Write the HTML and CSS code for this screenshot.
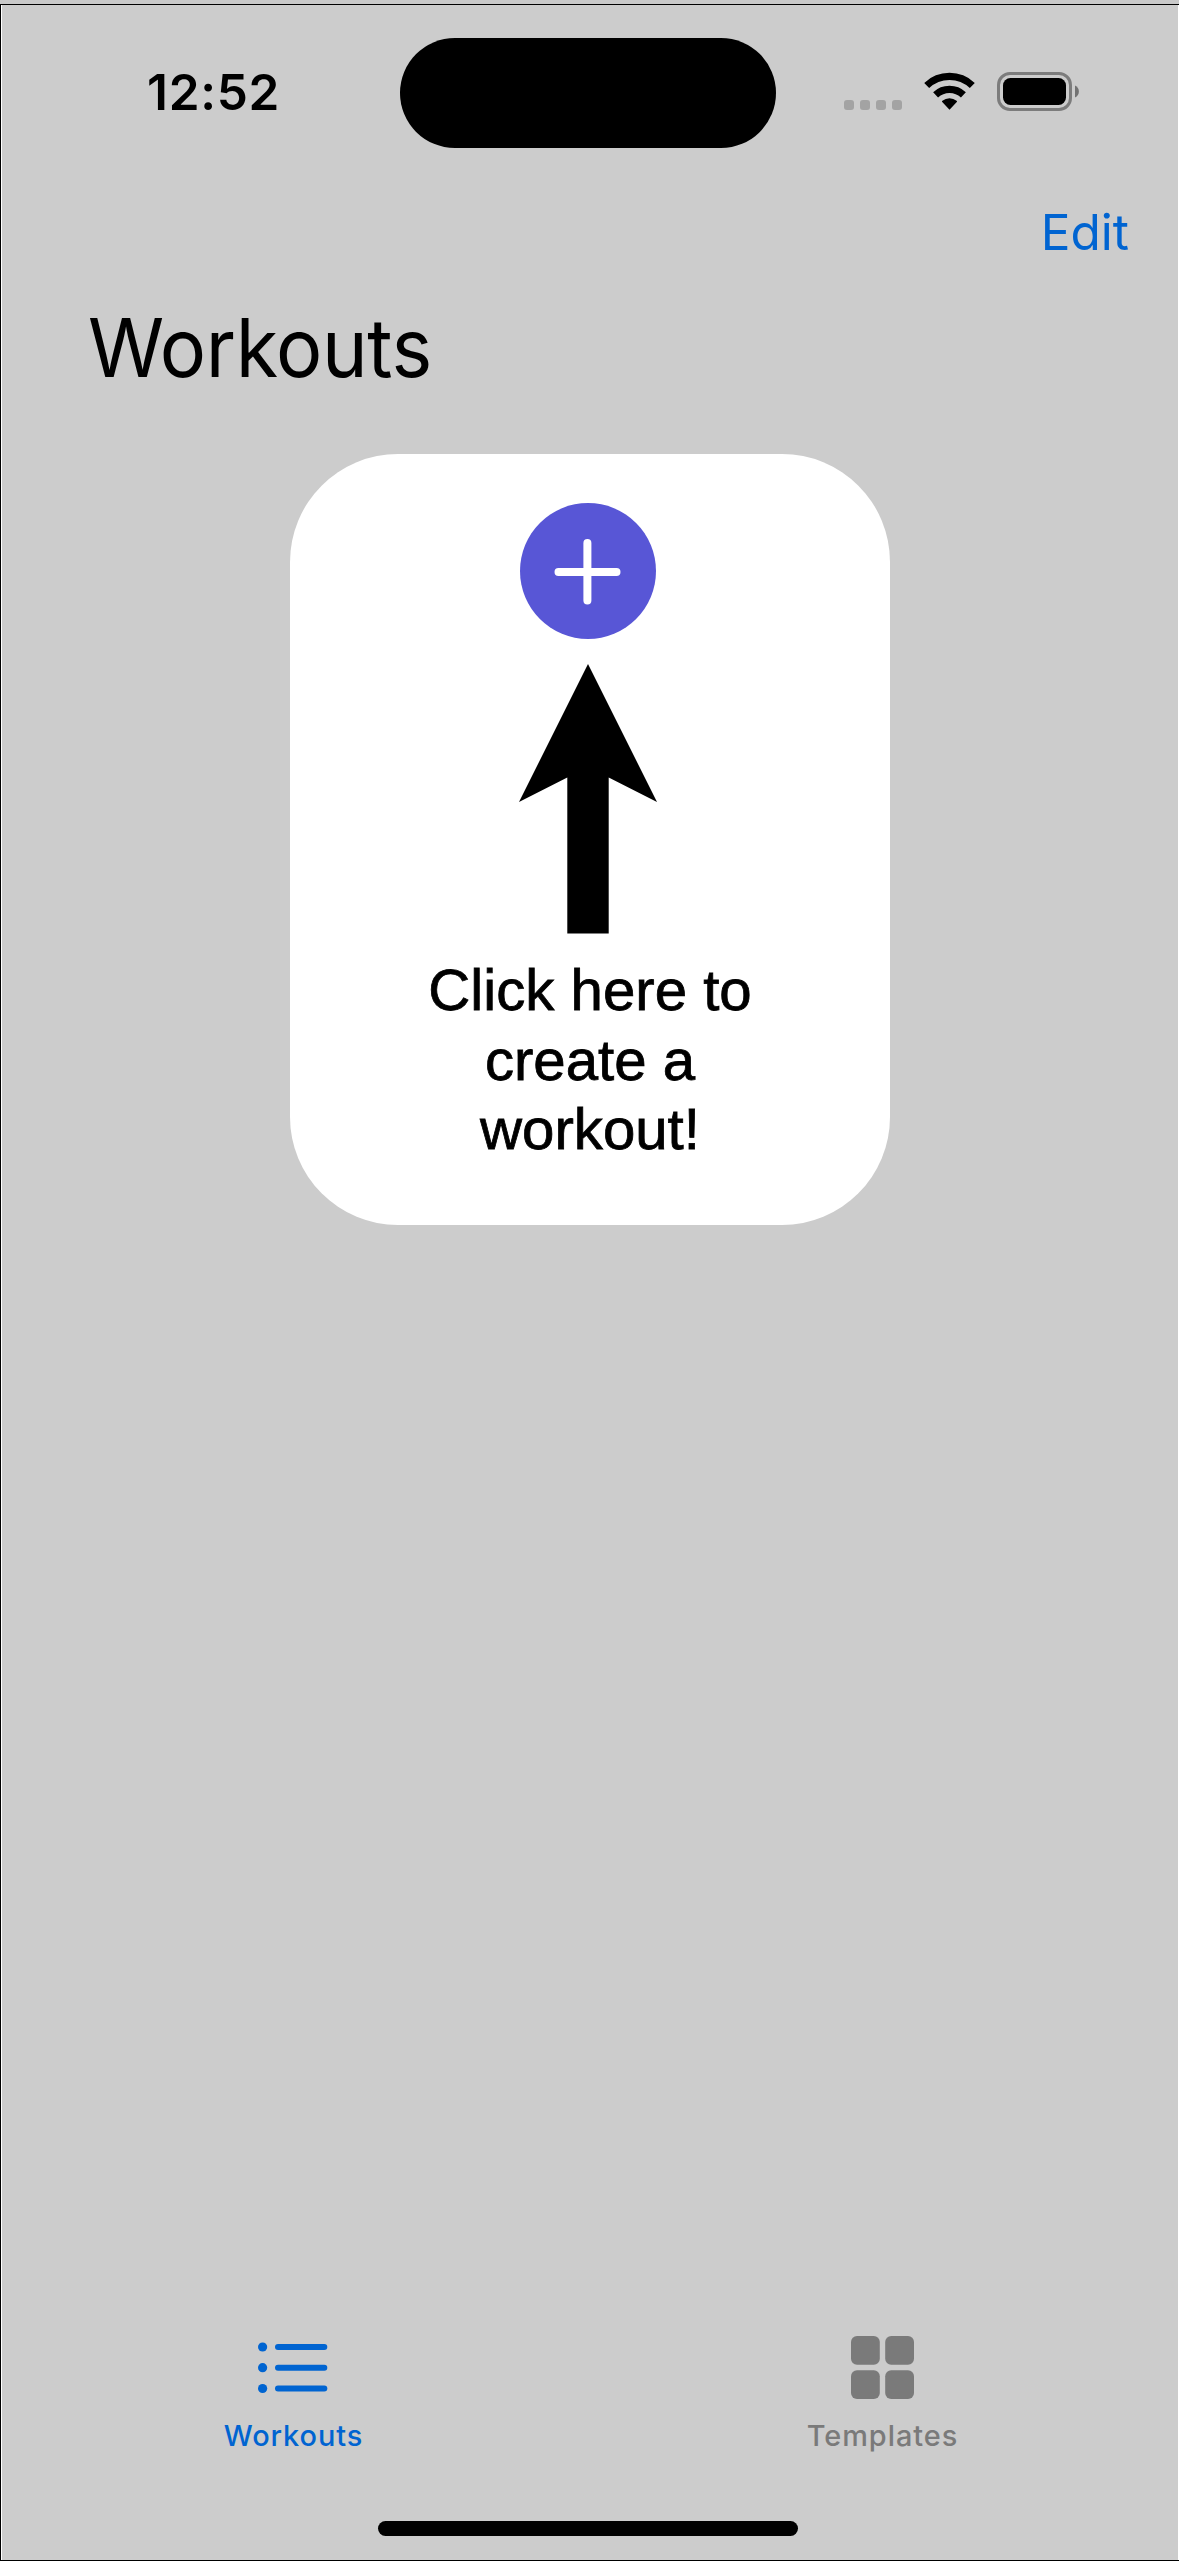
FILE: index.html
```html
<!DOCTYPE html>
<html lang="en">
<head>
<meta charset="utf-8">
<title>Workouts</title>
<link rel="stylesheet" href="styles.css">
</head>
<body>
<div class="phone">
  <header class="status">
    <div class="time">12:52</div>
    <div class="island"></div>
    <div class="signals">
      <svg width="58" height="39" viewBox="0 0 58 39" fill="#a3a3a3"><rect x="0" y="28" width="10" height="10" rx="3"/><rect x="16" y="28" width="10" height="10" rx="3"/><rect x="32" y="28" width="10" height="10" rx="3"/><rect x="48" y="28" width="10" height="10" rx="3"/></svg>
      <svg width="51" height="39" viewBox="0 0 51 39"><path d="M2.7 13.5A33.2 33.2 0 0 1 48.3 13.5M11.6 22.9A20.3 20.3 0 0 1 39.4 22.9" fill="none" stroke="#000" stroke-width="7.2"/><path d="M25.5 37.7L18 29.8Q17.8 29.2 18.4 28.8A11.3 11.3 0 0 1 32.6 28.8Q33.2 29.2 33 29.8Z"/></svg>
      <svg width="82" height="39" viewBox="0 0 82 39"><rect x="1.5" y="1.5" width="72" height="36" rx="11.5" fill="none" stroke="#7c7c7c" stroke-width="3"/><rect x="6" y="6" width="63" height="27" rx="7.5"/><path d="M78 13.5A6.6 6.6 0 0 1 78 25.5Z" fill="#727272"/></svg>
    </div>
  </header>
  <nav class="nav"><a class="edit">Edit</a></nav>
  <h1 class="title">Workouts</h1>
  <main class="card">
    <svg class="add" width="136" height="136" viewBox="0 0 136 136"><circle cx="68" cy="68" r="68" fill="#5856d6"/><path d="M38.5 69h58M67.4 40v57.5" stroke="#fff" stroke-width="8" stroke-linecap="round"/></svg>
    <svg class="arrow" width="138" height="270" viewBox="0 0 138 270"><path d="M69 0L138 138L89.7 113.5V269.5H48.3V113.5L0 138Z"/></svg>
    <p class="hint">Click here to<br>create a<br>workout!</p>
  </main>
  <footer class="tabs">
    <a class="tab active">
      <svg width="70" height="63" viewBox="0 0 70 63" fill="currentColor"><circle cx="4.6" cy="11" r="4.6"/><circle cx="4.6" cy="31.7" r="4.6"/><circle cx="4.6" cy="52.5" r="4.6"/><rect x="17" y="8" width="52.3" height="6" rx="3"/><rect x="17" y="28.7" width="52.3" height="6" rx="3"/><rect x="17" y="49.5" width="52.3" height="6" rx="3"/></svg>
      <span class="label">Workouts</span>
    </a>
    <a class="tab">
      <svg width="63" height="63" viewBox="0 0 63 63" fill="currentColor"><rect width="28.8" height="28.8" rx="6"/><rect x="34.2" width="28.8" height="28.8" rx="6"/><rect y="34.2" width="28.8" height="28.8" rx="6"/><rect x="34.2" y="34.2" width="28.8" height="28.8" rx="6"/></svg>
      <span class="label">Templates</span>
    </a>
  </footer>
  <div class="home"></div>
</div>
</body>
</html>
```
FILE: styles.css
```css
* { box-sizing: border-box; }
html { background: #c9c9c9; }
body { margin: 0; padding-top: 4px; font-family: Inter, sans-serif; color: #000; }
.phone { width: 1179px; height: 2557px; background: #ccc; border: solid #000; border-width: 1px 0 1px 1px; box-shadow: inset 1px 0 #fff, inset -1px 0 #fff; padding: 0 1px; display: flex; flex-direction: column; }
.status { height: 176px; flex: none; display: grid; grid-template-columns: 397.5px 376px 1fr; align-items: center; }
.time { font-size: 49.5px; font-weight: 600; line-height: 60px; letter-spacing: 0.7px; padding: 0 0 2px 145px; }
.island { height: 110.5px; border-radius: 56px; background: #000; }
.signals { display: flex; gap: 22px; align-self: start; padding: 67px 0 0 68.5px; }
.nav { display: flex; justify-content: flex-end; padding: 0 49px 2px 0; height: 104px; flex: none; align-items: center; font-size: 49.5px; line-height: 60px; color: #0064d1; }
.title { margin: 13px 0 0 86px; font-size: 81.5px; line-height: 100px; font-weight: 400; letter-spacing: -0.4px; transform: scaleX(0.948); transform-origin: left; }
.card { width: 600px; height: 770.5px; flex: none; margin: 56px 0 0 288px; border-radius: 108px; background: #fff; padding: 48.5px 0 0; }
.add { display: block; margin-left: 230.3px; }
.arrow { display: block; margin: 25.5px 0 0 229px; }
.hint { margin: 21px 0 0; text-align: center; font: 58.2px/69.5px "Liberation Sans", Arial, sans-serif; -webkit-text-stroke: 0.8px #000; }
.tabs { display: flex; width: 1178px; margin: auto 0 0 -3.5px; font-size: 28.9px; font-weight: 500; line-height: 36px; color: #7a7a7a; }
.tab { flex: 1; display: flex; flex-direction: column; align-items: center; gap: 19px; }
.label { letter-spacing: 0.95px; margin-right: -1px; }
.active { color: #0064d1; }
.home { width: 420px; height: 15px; flex: none; margin: 67px 0 24px 376px; border-radius: 8px; background: #000; }
```
